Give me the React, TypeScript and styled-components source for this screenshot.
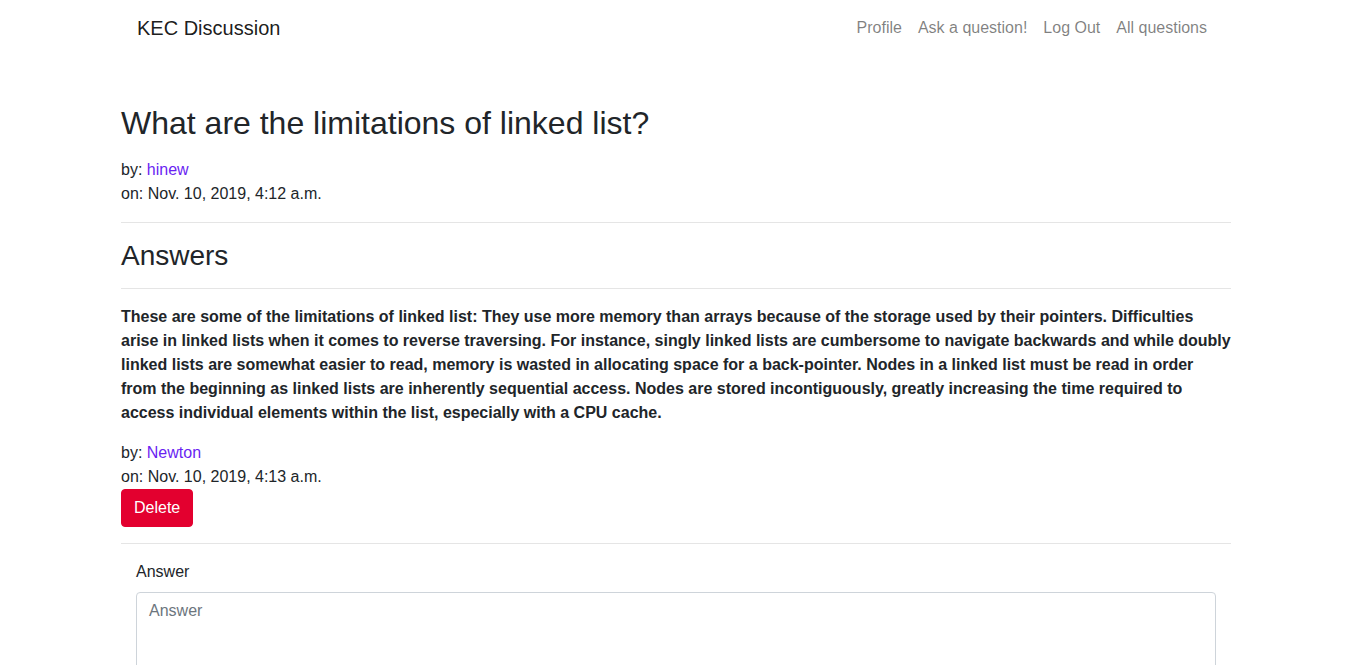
import styled, { createGlobalStyle } from 'styled-components';

const GlobalStyle = createGlobalStyle`
  *, *::before, *::after {
    box-sizing: border-box;
  }
  html, body {
    margin: 0;
    overflow: hidden;
  }
  body {
    margin-right: 1px;
    font-family: "Liberation Sans", Arial, sans-serif;
    font-size: 16px;
    line-height: 1.5;
    color: #212529;
    background: #fff;
  }
`;

const Container = styled.div`
  width: 100%;
  max-width: 1140px;
  margin: 0 auto;
  padding: 0 15px;
`;

const NavBar = styled.nav`
  display: flex;
  align-items: center;
  justify-content: space-between;
  padding: 8px 16px;
`;

const Brand = styled.a`
  font-size: 20px;
  line-height: 30px;
  padding: 5px 0;
  color: rgba(0, 0, 0, 0.9);
  text-decoration: none;
`;

const NavList = styled.ul`
  display: flex;
  list-style: none;
  margin: 0;
  padding: 0;
`;

const NavLink = styled.a`
  display: block;
  padding: 8px;
  color: rgba(0, 0, 0, 0.5);
  text-decoration: none;
`;

const Title = styled.h2`
  font-size: 32px;
  font-weight: 500;
  line-height: 1.2;
  margin: 48px 0 16px;
`;

const SubHeading = styled.h3`
  font-size: 28px;
  font-weight: 500;
  line-height: 33px;
  margin: 16px 0 8px;
`;

const Meta = styled.div`
  line-height: 24px;
`;

const UserLink = styled.a`
  color: #6a1ff2;
  text-decoration: none;
`;

const Rule = styled.hr`
  border: 0;
  border-top: 1px solid rgba(0, 0, 0, 0.1);
  margin: 16px 0;
`;

const AnswerText = styled.p`
  font-weight: 700;
  margin: 16px 0;
`;

const DangerButton = styled.button`
  display: inline-block;
  font-family: inherit;
  font-size: 16px;
  line-height: 24px;
  padding: 6px 12px;
  border: 1px solid #e3002f;
  border-radius: 4px;
  background: #e3002f;
  color: #fff;
  cursor: pointer;
`;

const FormWrap = styled.form`
  padding: 0 15px;
`;

const Label = styled.label`
  display: inline-block;
  margin-bottom: 8px;
`;

const TextArea = styled.textarea`
  display: block;
  width: 100%;
  height: 120px;
  padding: 6px 12px;
  font-family: inherit;
  font-size: 16px;
  line-height: 24px;
  color: #495057;
  border: 1px solid #ced4da;
  border-radius: 4px;
  resize: vertical;
  &::placeholder {
    color: #6c757d;
  }
`;

const navItems = ['Profile', 'Ask a question!', 'Log Out', 'All questions'];

const App = () => {
  return (
    <>
      <GlobalStyle />
      <Container>
        <NavBar>
          <Brand href="#">KEC Discussion</Brand>
          <NavList>
            {navItems.map((item) => (
              <li key={item}>
                <NavLink href="#">{item}</NavLink>
              </li>
            ))}
          </NavList>
        </NavBar>

        <Title>What are the limitations of linked list?</Title>
        <Meta>
          by: <UserLink href="#">hinew</UserLink>
          <br />
          on: Nov. 10, 2019, 4:12 a.m.
        </Meta>
        <Rule />

        <SubHeading>Answers</SubHeading>
        <Rule />

        <AnswerText>
          These are some of the limitations of linked list: They use more
          memory than arrays because of the storage used by their pointers.
          Difficulties arise in linked lists when it comes to reverse
          traversing. For instance, singly linked lists are cumbersome to
          navigate backwards and while doubly linked lists are somewhat easier
          to read, memory is wasted in allocating space for a back-pointer.
          Nodes in a linked list must be read in order from the beginning as
          linked lists are inherently sequential access. Nodes are stored
          incontiguously, greatly increasing the time required to access
          individual elements within the list, especially with a CPU cache.
        </AnswerText>
        <Meta>
          by: <UserLink href="#">Newton</UserLink>
          <br />
          on: Nov. 10, 2019, 4:13 a.m.
        </Meta>
        <DangerButton type="button">Delete</DangerButton>
        <Rule />

        <FormWrap onSubmit={(e) => e.preventDefault()}>
          <Label htmlFor="answer">Answer</Label>
          <TextArea id="answer" placeholder="Answer" />
        </FormWrap>
      </Container>
    </>
  );
};

export default App;
